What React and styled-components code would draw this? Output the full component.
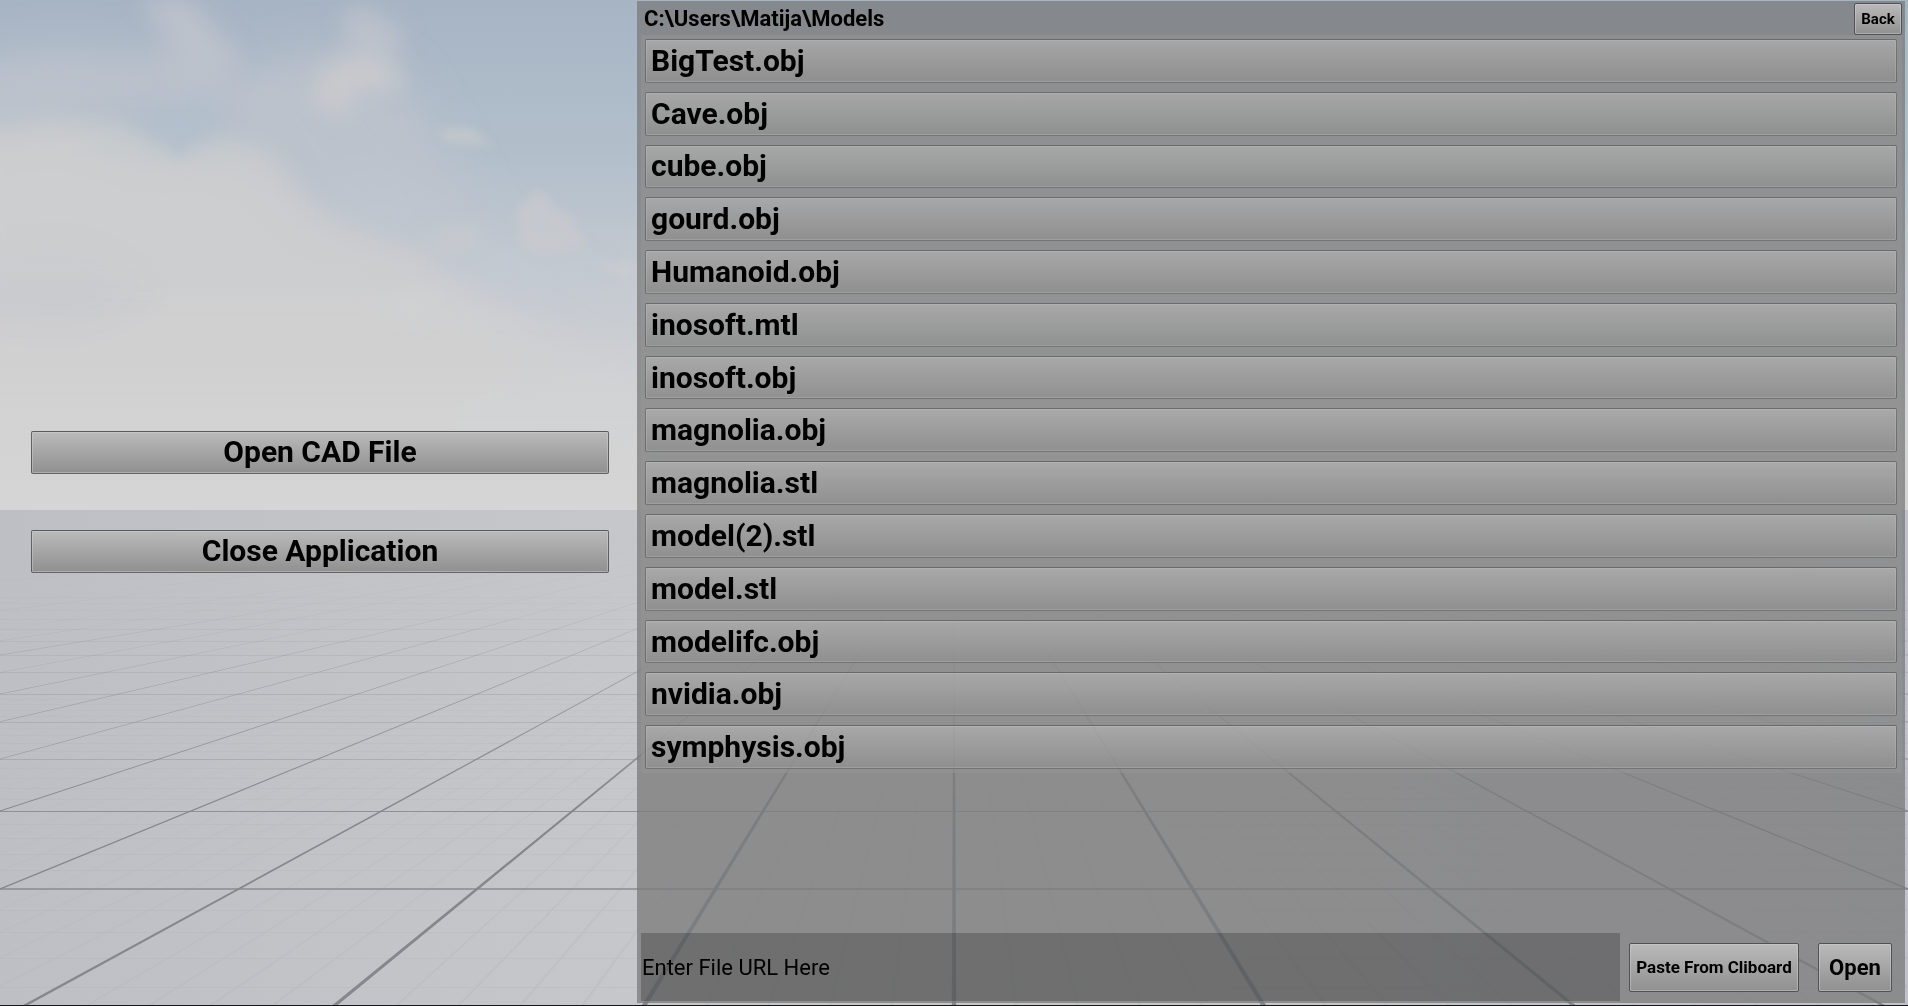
import React from 'react';
import styled, { createGlobalStyle, css } from 'styled-components';

const GlobalStyle = createGlobalStyle`
  *, *::before, *::after { box-sizing: border-box; }
  body {
    margin: 0;
    background: #c2c4c9;
    font-family: Roboto, "Liberation Sans", sans-serif;
    color: #000;
  }
`;

const Screen = styled.main`
  position: relative;
  display: grid;
  grid-template-columns: minmax(0, 1fr) minmax(0, 2fr);
  min-height: 100vh;
  padding-bottom: 2px;
  overflow: hidden;
`;

const Backdrop = styled.svg`
  position: absolute;
  inset: 0;
  width: 100%;
  height: 100%;
`;

const Menu = styled.nav`
  position: relative;
  display: flex;
  flex-direction: column;
  justify-content: center;
  gap: 56px;
  padding: 0 27px 0 31px;
`;

const bevel = css`
  border: 1px solid rgba(70, 72, 74, 0.75);
  border-radius: 2px;
  background: linear-gradient(#bababa, #909090);
  box-shadow: inset 0 0 0 1px rgba(210, 210, 210, 0.45);
  color: #000;
  font-family: inherit;
  font-weight: 700;
  white-space: nowrap;
  cursor: pointer;
`;

const MenuButton = styled.button`
  ${bevel}
  height: 43px;
  padding: 0 8px 2px;
  font-size: 30px;
  line-height: 34px;
`;

const Browser = styled.section`
  position: relative;
  display: flex;
  flex-direction: column;
  margin: 1px 3px 1px 1px;
  padding: 0 3px 2px 4px;
  background: rgba(121, 121, 121, 0.75);
`;

const Header = styled.header`
  display: flex;
  align-items: center;
  justify-content: space-between;
  height: 34px;
  padding: 2px 0 0 3px;
`;

const Path = styled.h1`
  margin: 0;
  font-size: 22px;
  line-height: 28px;
  font-weight: 700;
`;

const ActionButton = styled.button`
  ${bevel}
  border-color: #505254;
  height: ${(p) => (p.$compact ? 32 : 49)}px;
  width: ${(p) => p.$width}px;
  margin: ${(p) => (p.$compact ? '0' : '0 10px 0 9px')};
  padding: 0;
  font-size: ${(p) => p.$size}px;
  flex: none;
`;

const FileList = styled.ul`
  display: grid;
  grid-auto-rows: 1fr;
  gap: 9px;
  min-height: 738px;
  margin: 0;
  padding: 4px 5px 4px 4px;
  list-style: none;
  background: rgba(150, 150, 150, 0.5);
`;

const FileItem = styled.li`
  display: flex;
`;

const FileButton = styled.button`
  ${bevel}
  flex: 1;
  padding: 0 5px;
  border-color: rgba(80, 82, 84, 0.6);
  background: linear-gradient(rgba(187, 187, 187, 0.55), rgba(143, 143, 143, 0.55));
  box-shadow: inset 0 0 0 1px rgba(205, 205, 205, 0.25);
  font-size: 30px;
  line-height: 34px;
  text-align: left;
`;

const Footer = styled.form`
  display: flex;
  align-items: center;
  margin-top: auto;
`;

const UrlInput = styled.input`
  flex: 1;
  min-width: 0;
  height: 68px;
  padding: 0 1px;
  border: 0;
  border-radius: 0;
  outline: 0;
  background: rgba(0, 0, 0, 0.21);
  color: #000;
  font-family: inherit;
  font-size: 22px;
  &::placeholder { color: #000; opacity: 1; }
`;

const FILES = [
  'BigTest.obj', 'Cave.obj', 'cube.obj', 'gourd.obj', 'Humanoid.obj',
  'inosoft.mtl', 'inosoft.obj', 'magnolia.obj', 'magnolia.stl',
  'model(2).stl', 'model.stl', 'modelifc.obj', 'nvidia.obj', 'symphysis.obj',
];

// Perspective floor: every grid line is projected from one vanishing point.
const VX = 954;
const VY = 499;
const DEPTH = 1560;
const BOTTOM = 1006;
const CELL = 238.5 / 390;

const rowY = (n) => VY + DEPTH / n;
const floorX = (k, y) => VX + k * CELL * (y - VY);

function FloorGrid() {
  const major = [];
  const minor = [];
  for (let k = -22; k <= 22; k += 1) {
    const x = floorX(k, BOTTOM);
    const w = k === 0 ? 2.2 : 2.6;
    major.push(<polygon key={k} points={`${VX},${VY} ${x - w},${BOTTOM} ${x + w},${BOTTOM}`} />);
  }
  for (let i = -60; i <= 60; i += 1) {
    if (i % 5) {
      const x = floorX(i / 5, BOTTOM);
      minor.push(<polygon key={`v${i}`} points={`${VX},${VY} ${x - 1.6},${BOTTOM} ${x + 1.6},${BOTTOM}`} />);
    }
  }
  const rows = [];
  for (let n = 4; n <= 16; n += 1) {
    const h = n === 4 ? 2 : 1;
    const opacity = { 4: 0.7, 5: 0.85, 6: 0.38, 7: 0.3, 8: 0.3 }[n] || Math.max(0.04, 0.2 - (n - 9) * 0.03);
    rows.push(<rect key={n} x="0" y={Math.round(rowY(n)) - (n === 4 ? 1 : 0)} width="1908" height={h} opacity={opacity} />);
  }
  for (let i = 16; i <= 40; i += 1) {
    if (i % 5) {
      minor.push(<rect key={`h${i}`} x="0" y={Math.round(rowY(i / 5))} width="1908" height="1" />);
    }
  }
  return (
    <g>
      <g fill="#a9acb1" opacity="0.2" mask="url(#fade)">{minor}</g>
      <g fill="#85888e">{rows}</g>
      <g fill="#84878c" mask="url(#fade)">{major}</g>
    </g>
  );
}

function Scene() {
  return (
    <Backdrop viewBox="0 0 1908 1006" preserveAspectRatio="none" aria-hidden="true">
      <defs>
        <linearGradient id="sky" x1="0" y1="0" x2="0" y2="1">
          <stop offset="0" stopColor="#a7b4c4" />
          <stop offset="0.3" stopColor="#b2bfcb" />
          <stop offset="0.55" stopColor="#c5cad1" />
          <stop offset="0.8" stopColor="#d0d2d4" />
          <stop offset="1" stopColor="#d6d6d6" />
        </linearGradient>
        <linearGradient id="haze" x1="0" y1="0" x2="0" y2="1">
          <stop offset="0" stopColor="#d5d5d5" stopOpacity="0" />
          <stop offset="1" stopColor="#d5d5d5" />
        </linearGradient>
        <linearGradient id="floor" x1="0" y1="0" x2="1" y2="0">
          <stop offset="0" stopColor="#bdbfc4" />
          <stop offset="0.33" stopColor="#c6c7cb" />
          <stop offset="0.6" stopColor="#c7c7c9" />
          <stop offset="1" stopColor="#c0c1c9" />
        </linearGradient>
        <linearGradient id="fadeRamp" gradientUnits="userSpaceOnUse" x1="0" y1="510" x2="0" y2="1006">
          <stop offset="0" stopColor="#000" />
          <stop offset="0.14" stopColor="#222" />
          <stop offset="0.35" stopColor="#aaa" />
          <stop offset="0.6" stopColor="#fff" />
        </linearGradient>
        <mask id="fade" maskUnits="userSpaceOnUse" x="0" y="510" width="1908" height="496">
          <rect x="0" y="510" width="1908" height="496" fill="url(#fadeRamp)" />
        </mask>
        <filter id="soft" x="-50%" y="-50%" width="200%" height="200%"><feGaussianBlur stdDeviation="22" /></filter>
        <filter id="mid" x="-50%" y="-50%" width="200%" height="200%"><feGaussianBlur stdDeviation="11" /></filter>
        <filter id="crisp" x="-50%" y="-50%" width="200%" height="200%"><feGaussianBlur stdDeviation="5" /></filter>
        <clipPath id="skyClip"><rect width="1908" height="510" /></clipPath>
      </defs>
      <rect width="1908" height="510" fill="url(#sky)" />
      <g clipPath="url(#skyClip)">
        <g filter="url(#soft)">
          <path d="M-60 150 L60 130 L150 160 L250 160 L310 230 L420 265 L520 330 L660 420 L660 540 L-60 540Z" fill="#d0d0d1" />
          <path d="M-60 70 L60 50 L140 60 L190 30 L230 80 L330 50 L400 80 L470 200 L440 250 L300 210 L220 110 L150 110 L-60 130Z" fill="#bcc2cc" />
          <path d="M-60 250 L80 240 L170 290 L80 330 L-60 320Z" fill="#cacbcf" />
          <path d="M300 190 L400 180 L500 240 L460 260 L340 240Z" fill="#bfc6cf" />
          <path d="M430 420 L640 370 L640 440 L480 440Z" fill="#ced1d4" />
        </g>
        <g filter="url(#mid)">
          <path d="M-20 132 L50 122 L120 122 L165 148 L180 160 L190 142 L230 136 L280 158 L300 190 L340 225 L440 262 L400 290 L-20 290Z" fill="#cbccce" opacity="0.65" />
          <path d="M140 0 L190 0 L240 60 L220 86 L180 84 L170 40Z" fill="#bcc1cb" />
          <path d="M345 8 L365 6 L402 30 L400 60 L345 60Z" fill="#bbc1cb" />
          <path d="M318 78 L330 62 L372 56 L402 72 L402 88 L352 92 L348 118 L312 104Z" fill="#c8c9cc" />
          <path d="M200 92 L218 98 L216 134 L184 150 L150 122Z" fill="#b3bfcc" />
          <path d="M430 232 L470 226 L490 240 L460 252 L430 244Z" fill="#cccdcf" opacity="0.7" />
          <path d="M380 300 L430 296 L440 316 L390 316Z" fill="#d0d1d2" />
          <path d="M500 250 L600 260 L560 290 L480 280Z" fill="#c3c9d2" />
        </g>
        <g filter="url(#crisp)">
          <path d="M128 120 L168 142 L180 158 L190 138 L218 130 L200 118Z" fill="#b3bfcc" opacity="0.7" />
          <path d="M440 132 L446 128 L472 128 L482 138 L494 146 L444 142Z" fill="#c4c8cc" opacity="0.8" />
          <path d="M516 212 L534 190 L546 194 L556 210 L568 212 L590 246 L540 256 L518 244Z" fill="#c8cace" opacity="0.75" />
          <path d="M584 256 L600 262 L618 262 L634 258 L634 278 L612 276Z" fill="#cbcdd0" opacity="0.7" />
        </g>
        <rect y="330" width="1908" height="180" fill="url(#haze)" />
      </g>
      <rect y="510" width="1908" height="496" fill="url(#floor)" />
      <FloorGrid />
      <rect y="1005" width="1908" height="1" fill="#17181a" />
    </Backdrop>
  );
}

export default function App() {
  return (
    <>
      <GlobalStyle />
      <Screen>
        <Scene />
        <Menu aria-label="Main menu">
          <MenuButton type="button">Open CAD File</MenuButton>
          <MenuButton type="button">Close Application</MenuButton>
        </Menu>
        <Browser aria-label="File browser">
          <Header>
            <Path>C:\Users\Matija\Models</Path>
            <ActionButton type="button" $compact $width={48} $size={15}>Back</ActionButton>
          </Header>
          <FileList>
            {FILES.map((name) => (
              <FileItem key={name}>
                <FileButton type="button">{name}</FileButton>
              </FileItem>
            ))}
          </FileList>
          <Footer onSubmit={(e) => e.preventDefault()}>
            <UrlInput type="text" aria-label="File URL" placeholder="Enter File URL Here" />
            <ActionButton type="button" $width={170} $size={17}>Paste From Cliboard</ActionButton>
            <ActionButton type="submit" $width={74} $size={22}>Open</ActionButton>
          </Footer>
        </Browser>
      </Screen>
    </>
  );
}
